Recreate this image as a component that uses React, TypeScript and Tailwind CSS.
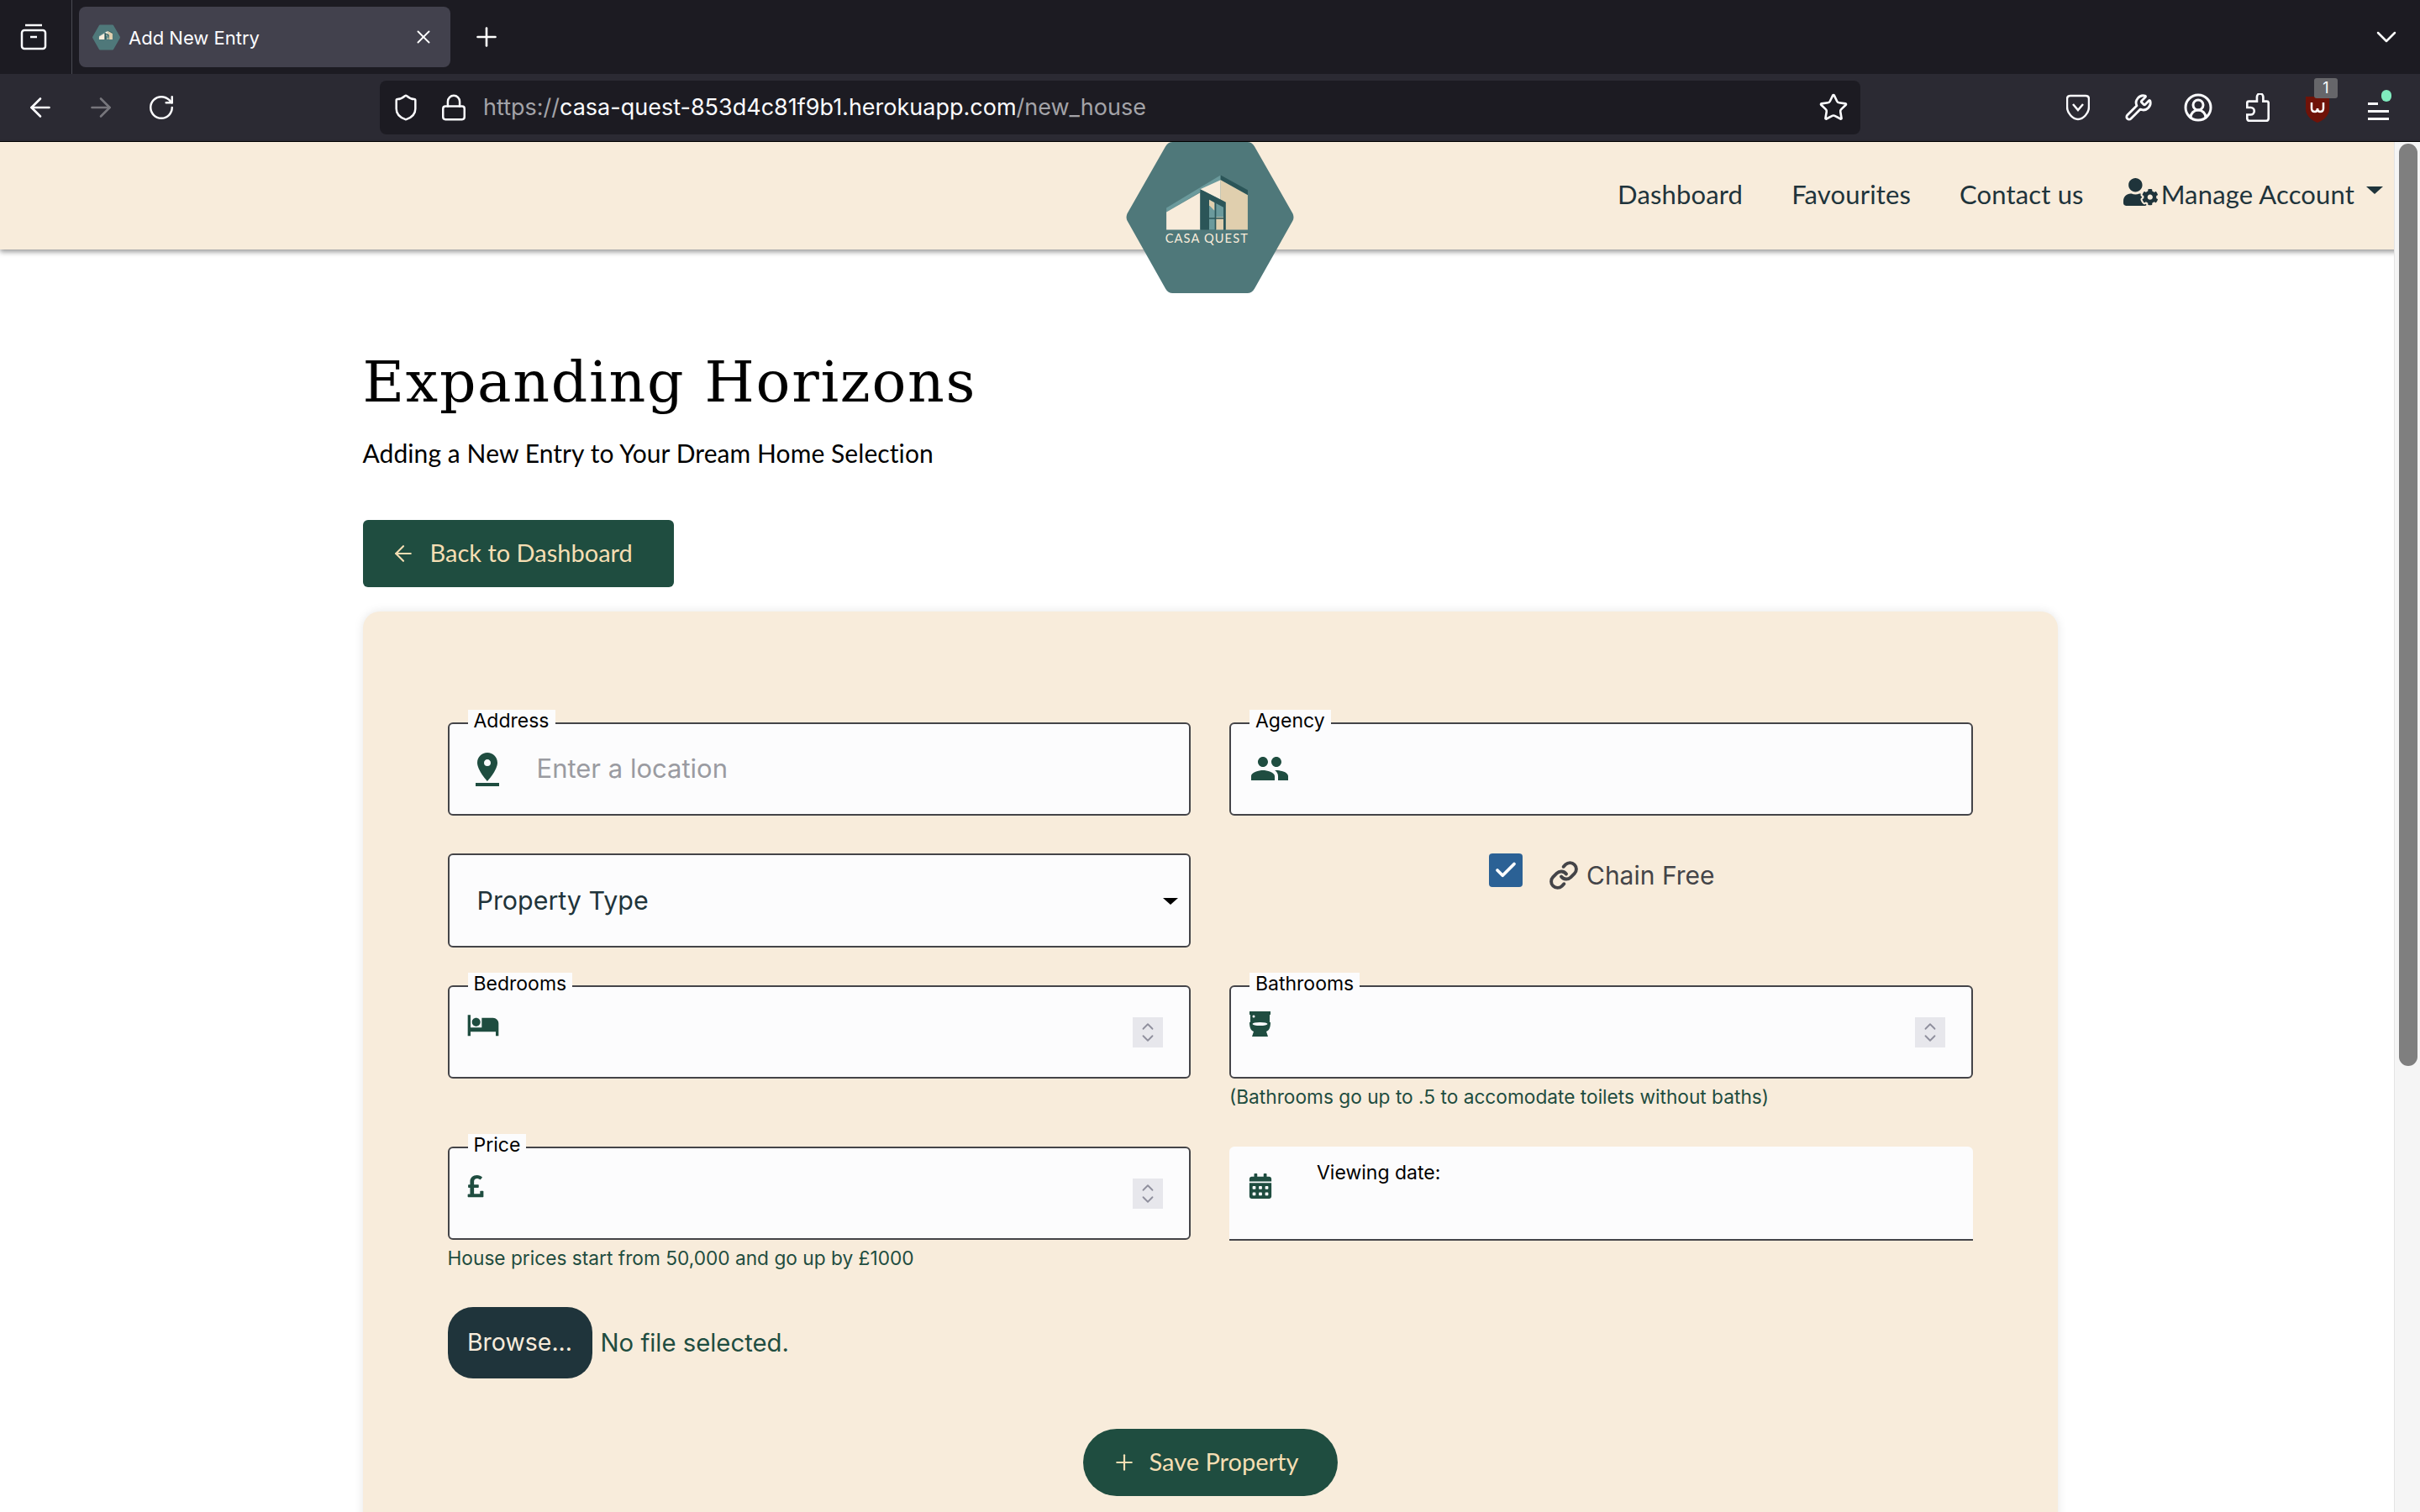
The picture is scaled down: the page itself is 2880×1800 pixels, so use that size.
import React from "react";
import { Shield, Lock, Star, X, Plus, ArrowLeft, ArrowRight, RotateCw, Wrench, CircleUserRound, ChevronDown, ChevronUp, Link, Check } from "lucide-react";
import { MdPinDrop, MdPeople, MdHotel } from "react-icons/md";
import { FaPoundSign, FaUserCog, FaCalendarAlt } from "react-icons/fa";

function Logo({ cls, text = true }: { cls: string; text?: boolean }) {
  return (
    <svg viewBox="120 26 600 541" className={cls}>
      <path d="M287 26H553Q570 26 579 42L716 282Q722 295 716 308L579 551Q570 567 553 567H287Q270 567 261 551L124 308Q118 295 124 282L261 42Q270 26 287 26Z" fill="#4f787a" />
      <path d="M264 262L458 145V162L264 277Z" fill="#6b9a9c" />
      <path d="M458 145L555 198V216L458 162Z" fill="#2b5558" />
      <path d="M264 277L385 207V340H264Z" fill="#f8ecdb" />
      <path d="M385 195L458 162V232Z" fill="#f8ecdb" />
      <path d="M458 162L555 216V340H476V242L458 232Z" fill="#e0cfae" />
      <path d="M385 195L476 242V340H385Z" fill="#2b5558" />
      <path d="M417 233L468 260V340H417Z" fill="#6b9a9c" />
      <path d="M417 233L436 243V272L417 252Z" fill="#e0cfae" />
      <path d="M441 295H468V340H441Z" fill="#e0cfae" />
      <path d="M417 297H468V302H417ZM437 240H442V340H437Z" fill="#2b5558" />
      {text && (
        <text x="409" y="388" textAnchor="middle" fontSize="44" letterSpacing="3.4" fill="#f8ecdb" fontFamily="Lato, sans-serif">CASA QUEST</text>
      )}
    </svg>
  );
}

function Toilet() {
  return (
    <svg viewBox="0 0 27 31" className="w-[27px] h-[31px]" fill="#1f4d40">
      <path d="M1 0H26V4H25V13H26C26 20 24 23 21 24L23 30H4L6 24C3 23 1 20 1 13H2V4H1Z" />
      <circle cx="6" cy="6" r="1.5" fill="#fcfcfd" />
      <ellipse cx="13.5" cy="15" rx="9" ry="2" fill="#fcfcfd" />
    </svg>
  );
}

function Spinner() {
  return (
    <div className="absolute right-[31px] top-[36px] w-[36px] h-[36px] bg-[#e7e7ec] flex flex-col items-center justify-center text-[#8f8f9d]">
      <ChevronUp size={22} strokeWidth={2} className="-mb-[4px]" />
      <ChevronDown size={22} strokeWidth={2} className="-mt-[4px]" />
    </div>
  );
}

function Field({ label, children, helper }: { label: string; children?: React.ReactNode; helper?: string }) {
  return (
    <div>
      <div className="relative h-[111px] rounded-[6px] border-2 border-[#444448] bg-[#fcfcfd]">
        <span className="absolute -top-[17px] left-[22px] h-[27px] px-[7px] bg-[#fcfcfd] text-[23px] leading-[27px] text-black font-['Inter',sans-serif]">{label}</span>
        {children}
      </div>
      {helper && <p className="mt-[10px] h-[26px] text-[22.7px] leading-[24px] text-[#1f4d40] font-['Inter',sans-serif]">{helper}</p>}
    </div>
  );
}

const navCls = "text-[31px] tracking-[0.15px] leading-none text-[#1f343b] font-['Lato',sans-serif]";

export default function App() {
  return (
    <div className="relative h-[1800px] overflow-hidden bg-white flex flex-col font-['Inter',sans-serif]">
      {/* tab strip */}
      <div className="h-[88px] shrink-0 bg-[#1c1b22] flex items-center text-white">
        <svg viewBox="0 0 32 32" className="ml-[24px] w-[32px] h-[32px]" fill="none" stroke="#fbfbfe" strokeWidth="2.5">
          <rect x="2" y="8" width="28" height="22" rx="3" />
          <path d="M6 2H26" />
          <path d="M12 16H20" />
        </svg>
        <div className="ml-[29px] w-[1px] self-stretch bg-[#4a4a52]" />
        <div className="ml-[8px] w-[442px] h-[72px] rounded-[8px] bg-[#42414d] flex items-center pl-[16px]">
          <Logo cls="w-[33px] h-[33px]" text={false} />
          <span className="ml-[10px] mt-[2px] text-[22px] text-[#fbfbfe]">Add New Entry</span>
          <X size={26} strokeWidth={1.75} className="ml-auto mr-[19px]" />
        </div>
        <Plus size={36} strokeWidth={1.75} className="ml-[25px]" />
        <ChevronDown size={40} strokeWidth={1.5} className="ml-auto mr-[20px]" />
      </div>
      {/* toolbar */}
      <div className="h-[81px] shrink-0 bg-[#2b2a33] border-b border-black flex items-center text-[#fbfbfe]">
        <ArrowLeft size={36} strokeWidth={1.75} className="ml-[30px]" />
        <ArrowRight size={36} strokeWidth={1.75} className="ml-[36px] text-[#77767c]" />
        <RotateCw size={34} strokeWidth={1.75} className="ml-[37px]" />
        <div className="ml-[243px] w-[1762px] h-[64px] rounded-[8px] bg-[#1c1b22] flex items-center pl-[14px]">
          <Shield size={34} strokeWidth={1.75} />
          <Lock size={34} strokeWidth={1.75} className="ml-[23px]" />
          <span className="ml-[18px] mt-[1px] text-[27px] text-[#a3a3a8]">
            https://<span className="text-[#fbfbfe]">casa-quest-853d4c81f9b1.herokuapp.com</span>/new_house
          </span>
          <Star size={36} strokeWidth={1.75} className="ml-auto mr-[14px]" />
        </div>
        <svg viewBox="0 0 28 32" className="ml-[245px] w-[28px] h-[32px]" fill="none" stroke="#fbfbfe" strokeWidth="2.5">
          <path d="M5 2H23Q27 2 27 6V15C27 23 20 30 14 30C8 30 1 23 1 15V6Q1 2 5 2Z" />
          <path d="M8 12L14 19L20 12" />
        </svg>
        <Wrench size={34} strokeWidth={2} className="ml-[41px]" />
        <CircleUserRound size={36} strokeWidth={2} className="ml-[36px]" />
        <svg viewBox="0 0 26 32" className="ml-[39px] w-[28px] h-[34px]" fill="none" stroke="#fbfbfe" strokeWidth="2.5">
          <path d="M3 9H12V4A3.5 3.5 0 0 1 19 4V9H23Q25 9 25 11V28Q25 31 22 31H4Q1 31 1 28V24H5A4 4 0 0 0 5 16H1V11Q1 9 3 9Z" />
        </svg>
        <div className="relative ml-[43px] w-[34px] h-[40px]">
          <svg viewBox="0 0 28 32" className="absolute left-0 top-[6px] w-[28px] h-[32px]">
            <path d="M0 1H28V16C28 24 20 30 14 32C8 30 0 24 0 16Z" fill="#6f1208" />
            <path d="M7 8V15Q7 19 11 19Q14 19 14 15Q14 19 17 19Q21 19 21 15V8" fill="none" stroke="#fff" strokeWidth="2.5" />
          </svg>
          <span className="absolute left-[10px] -top-[15px] w-[28px] h-[24px] rounded-[3px] bg-[#66666a] text-[18px] leading-[24px] text-center text-white">1</span>
        </div>
        <div className="relative ml-[40px] w-[26px] h-[30px] flex flex-col justify-end gap-[6px]">
          <div className="w-[12px] h-[3px] bg-[#fbfbfe]" />
          <div className="w-[25px] h-[3px] bg-[#fbfbfe]" />
          <div className="w-[25px] h-[3px] bg-[#fbfbfe]" />
          <span className="absolute left-[16px] -top-[6px] w-[12px] h-[14px] rounded-full bg-[#80ebbe]" />
        </div>
      </div>
      {/* nav */}
      <nav className="relative z-10 h-[128px] shrink-0 bg-[#f8ecdb] shadow-[0_3px_6px_rgba(0,0,0,0.4)] flex items-center justify-end pr-[44px] pb-[4px]">
        <Logo cls="absolute left-[1340px] top-0 w-[200px] h-[180px]" />
        <span className={navCls}>Dashboard</span>
        <span className={`${navCls} ml-[58px]`}>Favourites</span>
        <span className={`${navCls} ml-[58px]`}>Contact us</span>
        <FaUserCog className="ml-[47px] -mt-[6px] text-[#1f343b]" size={41} />
        <span className={`${navCls} ml-[4px]`}>Manage Account</span>
        <span className="ml-[14px] mb-[9px] w-0 h-0 border-x-[10px] border-x-transparent border-t-[9px] border-t-[#1f343b]" />
      </nav>
      {/* main */}
      <main className="w-[2017px] mx-auto mt-[113px]">
        <h1 className="text-[68px] leading-[90px] tracking-[1.7px] text-black font-['DejaVu_Serif','Liberation_Serif',serif]">Expanding Horizons</h1>
        <p className="mt-[21px] text-[30px] tracking-[0.08px] leading-[36px] text-black font-['Lato',sans-serif]">Adding a New Entry to Your Dream Home Selection</p>
        <a className="mt-[62px] w-[370px] h-[80px] rounded-[6px] bg-[#1f4d40] text-[#f5deb3] flex items-center pl-[33px]">
          <ArrowLeft size={30} strokeWidth={1.75} />
          <span className="ml-[17px] -mt-[3px] text-[29px] font-['Lato',sans-serif]">Back to Dashboard</span>
        </a>
        <section className="mt-[29px] rounded-[20px] bg-[#f8ecdb] shadow-[0_0_12px_rgba(0,0,0,0.1)] px-[101px] pt-[132px] h-[1200px]">
          <div className="grid grid-cols-2 gap-x-[46px] gap-y-[45px]">
            <Field label="Address">
              <div className="h-full flex items-center pl-[21px]">
                <MdPinDrop size={48} className="text-[#1f4d40]" />
                <span className="ml-[35px] text-[31px] text-[#9a9ba1]">Enter a location</span>
              </div>
            </Field>
            <Field label="Agency">
              <div className="h-full flex items-center pl-[22px] pb-[2px]">
                <MdPeople size={48} className="text-[#1f4d40]" />
              </div>
            </Field>
            <div className="relative h-[112px] rounded-[6px] border-2 border-[#444448] bg-[#fcfcfd] flex items-center pl-[33px] pt-[2px]">
              <span className="text-[30.4px] text-[#1f343b]">Property Type</span>
              <span className="absolute right-[13px] top-[51px] w-0 h-0 border-x-[9px] border-x-transparent border-t-[8px] border-t-black" />
            </div>
            <div className="flex justify-center items-start gap-[31px]">
              <span className="ml-[2px] w-[40px] h-[40px] rounded-[4px] bg-[#2b6195] flex items-center justify-center text-white">
                <Check size={30} strokeWidth={3} />
              </span>
              <span className="mt-[8px] flex items-center gap-[9px] text-[#444448]">
                <Link size={36} strokeWidth={2.6} />
                <span className="text-[30px] leading-[34px]">Chain Free</span>
              </span>
            </div>
            <Field label="Bedrooms">
              <div className="pl-[20px] pt-[25px]"><MdHotel size={40} className="text-[#1f4d40]" /></div>
              <Spinner />
            </Field>
            <Field label="Bathrooms" helper="(Bathrooms go up to .5 to accomodate toilets without baths)">
              <div className="pl-[21px] pt-[29px]"><Toilet /></div>
              <Spinner />
            </Field>
            <Field label="Price" helper="House prices start from 50,000 and go up by £1000">
              <div className="pl-[16px] pt-[30px]"><FaPoundSign size={30} className="text-[#1f4d40]" /></div>
              <Spinner />
            </Field>
            <div className="relative self-start h-[112px] rounded-t-[6px] bg-[#fcfcfd] border-b-2 border-[#444448] flex items-start">
              <FaCalendarAlt size={30} className="ml-[22px] mt-[32px] text-[#1f4d40]" />
              <span className="ml-[52px] mt-[14px] text-[23px] text-black">Viewing date:</span>
            </div>
          </div>
          <div className="mt-[44px] flex items-center">
            <span className="w-[172px] h-[85px] rounded-[30px] bg-[#1f343b] text-[#f8ecdb] text-[28.5px] flex items-center justify-center">Browse...</span>
            <span className="ml-[10px] text-[29.3px] text-[#1f4d40]">No file selected.</span>
          </div>
          <div className="mt-[60px] flex justify-center">
            <span className="w-[303px] h-[80px] rounded-[40px] bg-[#1f4d40] text-[#f5deb3] flex items-center pl-[34px]">
              <Plus size={30} strokeWidth={1.75} />
              <span className="ml-[15px] -mt-[2px] text-[29px] font-['Lato',sans-serif]">Save Property</span>
            </span>
          </div>
        </section>
      </main>
      {/* scrollbar */}
      <div className="absolute z-20 right-0 top-[169px] bottom-0 w-[31px] bg-[#f5f5f5] border-l border-[#e4e4e4]">
        <div className="absolute left-[5px] top-[2px] w-[22px] h-[1098px] rounded-[11px] bg-[#7f7f7f]" />
      </div>
    </div>
  );
}
